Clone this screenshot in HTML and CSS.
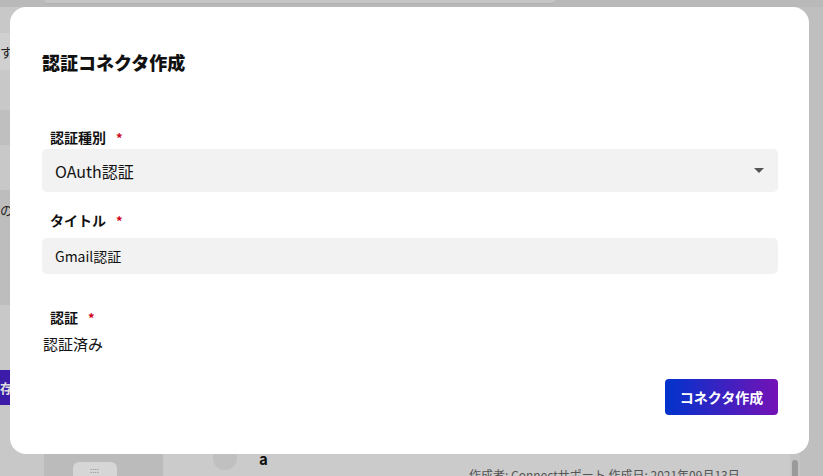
FILE: index.html
```html
<!doctype html>
<html lang="ja">
<head>
    <meta charset="UTF-8">
    <title>認証コネクタ作成</title>
    <link rel="stylesheet" href="styles.css">
</head>
<body>
<!--背景のページ-->
<div class="page">
    <div class="topbar">
        <div class="topcard"></div>
    </div>
    <div class="body">
        <div class="side">
            <div class="side-row r1"></div>
            <div class="side-row r2"><span>す</span></div>
            <div class="side-row r3"></div>
            <div class="side-row r4"></div>
            <div class="side-row r5"></div>
            <div class="side-row r6"><span>の</span></div>
            <div class="side-row r7"></div>
            <div class="side-row save"><span>存</span></div>
        </div>
        <div class="nav">
            <div class="nav-card"></div>
            <div class="nav-card grip">::::</div>
        </div>
        <div class="main">
            <div class="item">
                <span class="avatar"></span>
                <span class="item-name">a</span>
            </div>
            <div class="meta">作成者: Connectサポート 作成日: 2021年09月13日</div>
        </div>
        <div class="scroll"><div class="thumb"></div></div>
        <div class="gutter"></div>
    </div>
</div>

<!--モーダル-->
<div class="modal">
    <h2 class="modal-title">認証コネクタ作成</h2>

    <div class="field f1">
        <label class="label">認証種別<i class="req">*</i></label>
        <div class="select">
            <span>OAuth認証</span>
            <svg class="caret" width="10" height="5" viewBox="0 0 10 5"><path d="M0 0H10L5 5Z" fill="#555"/></svg>
        </div>
    </div>

    <div class="field f2">
        <label class="label">タイトル<i class="req">*</i></label>
        <div class="input">Gmail認証</div>
    </div>

    <div class="field f3">
        <label class="label">認証<i class="req">*</i></label>
        <div class="value">認証済み</div>
    </div>

    <div class="actions">
        <a href="javascript:;" class="btn">コネクタ作成</a>
    </div>
</div>
</body>
</html>
```

FILE: styles.css
```css
html, body {
    margin: 0;
    padding: 0;
}

body {
    width: 823px;
    height: 476px;
    overflow: hidden;
    background-color: #c1c1c1;
    font-family: "Noto Sans CJK JP", "Noto Sans", sans-serif;
    color: #111;
    position: relative;
}

a {
    text-decoration: none;
}

/* 背景 */
.page {
    display: flex;
    flex-direction: column;
    height: 476px;
}

.topbar {
    height: 7px;
    padding-left: 44px;
    background-color: #b9b9b9;
}

.topcard {
    width: 511px;
    height: 3px;
    background-color: #c6c6c6;
    border-bottom: 1px solid #b0b0b0;
    border-radius: 0 0 4px 4px;
}

.body {
    flex: 1;
    display: flex;
}

.side {
    width: 44px;
    display: flex;
    flex-direction: column;
    background-color: #c8c8c8;
    font-size: 13px;
}

.side-row {
    display: flex;
    align-items: center;
    justify-content: flex-start;
    overflow: hidden;
    white-space: nowrap;
    color: #222;
}

.r1 { height: 26px; }
.r2 { height: 37px; background-color: #d0d0d0; }
.r3 { height: 40px; }
.r4 { height: 35px; background-color: #bfbfbf; }
.r5 { height: 45px; }
.r6 { height: 115px; background-color: #bdbdbd; align-items: flex-start; padding-top: 10px; box-sizing: border-box; }
.r7 { height: 65px; }

.save {
    height: 35px;
    background: linear-gradient(90deg, #3a1ca8, #4a17a8);
    color: #ddd;
    font-weight: bold;
}

.nav {
    width: 119px;
    background-color: #bbbbbb;
    display: flex;
    flex-direction: column;
    justify-content: flex-end;
    align-items: center;
    gap: 8px;
}

.nav-card {
    width: 44px;
    height: 30px;
    border-radius: 6px;
    background-color: #c9c9c9;
    margin-right: 18px;
}

.nav-card.grip {
    height: 14px;
    background-color: #d6d6d6;
    border-radius: 6px 6px 0 0;
    font-size: 8px;
    line-height: 16px;
    text-align: center;
    color: #888;
}

.main {
    flex: 1;
    background-color: #cbcbcb;
    display: flex;
    flex-direction: column;
    justify-content: flex-end;
    padding-left: 50px;
}

.item {
    display: flex;
    align-items: center;
    gap: 22px;
}

.avatar {
    width: 24px;
    height: 24px;
    border-radius: 50%;
    background-color: #c0c0c0;
}

.item-name {
    font-weight: bold;
    font-size: 15px;
}

.meta {
    font-size: 12px;
    color: #555;
    height: 6px;
    line-height: 10px;
    padding-left: 256px;
    white-space: nowrap;
}

.scroll {
    width: 10px;
    background-color: #c4c4c4;
    display: flex;
    justify-content: center;
    align-items: flex-end;
}

.thumb {
    width: 6px;
    height: 16px;
    border-radius: 3px 3px 0 0;
    background-color: #9a9a9a;
}

.gutter {
    width: 23px;
    background-color: #bfbfbf;
}

/* モーダル */
.modal {
    position: absolute;
    left: 10px;
    top: 7px;
    width: 799px;
    height: 447px;
    box-sizing: border-box;
    padding: 42px 31px 0 32px;
    background-color: #fff;
    border-radius: 16px;
}

.modal-title {
    margin: 0;
    height: 26px;
    font-size: 18px;
    line-height: 26px;
    font-weight: 900;
}

.label {
    display: block;
    height: 20px;
    padding-left: 8px;
    font-size: 14px;
    line-height: 20px;
    font-weight: bold;
}

.req {
    font-style: normal;
    color: #d0021b;
    margin-left: 10px;
    font-size: 13px;
    line-height: 1;
}

.f1 { margin-top: 52px; }
.f2 { margin-top: 18px; }
.f3 { margin-top: 33px; }

.select, .input {
    background-color: #f2f2f2;
    border-radius: 5px;
    padding: 0 14px 0 13px;
    display: flex;
    align-items: center;
}

.select {
    height: 43px;
    margin-top: 2px;
    justify-content: space-between;
    font-size: 16px;
}

.input {
    height: 36px;
    margin-top: 8px;
    font-size: 14px;
}

.value {
    margin-top: 6px;
    height: 22px;
    padding-left: 1px;
    font-size: 15px;
    line-height: 22px;
}

.actions {
    display: flex;
    justify-content: flex-end;
    margin-top: 24px;
}

.btn {
    width: 113px;
    height: 36px;
    border-radius: 4px;
    background: linear-gradient(90deg, #0033cc, #7412b6);
    color: #fff;
    font-size: 14px;
    font-weight: bold;
    line-height: 36px;
    text-align: center;
}
```
